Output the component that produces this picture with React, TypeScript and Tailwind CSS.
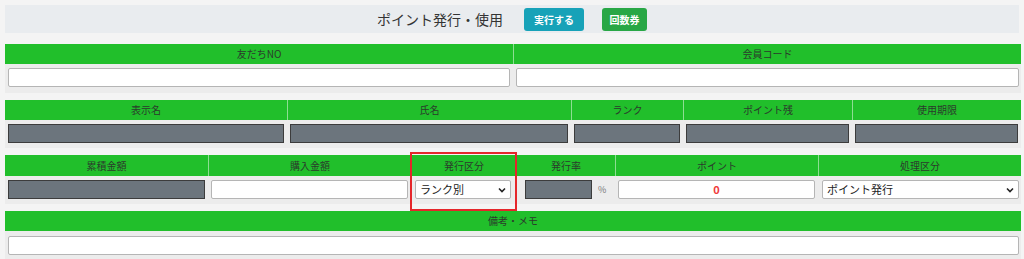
import React from "react";

const font = { fontFamily: '"Noto Sans CJK JP", "Noto Sans", sans-serif' };

function Head({ label, first }: { label: string; first?: boolean }) {
  return (
    <div
      className={`flex items-center justify-center text-[10px] text-[#2b3a2b] leading-none ${
        first ? "" : "border-l border-[#8ede93]"
      }`}
    >
      {label}
    </div>
  );
}

function WhiteInput({ children, center }: { children?: React.ReactNode; center?: boolean }) {
  return (
    <div
      className={`h-[19px] w-full bg-white border border-[#b5b5b5] rounded-[2px] flex items-center ${
        center ? "justify-center" : ""
      }`}
    >
      {children}
    </div>
  );
}

function GrayInput() {
  return <div className="h-[19px] w-full bg-[#6c757d] border border-[#3c3c3c]" />;
}

function Select({ label }: { label: string }) {
  return (
    <div className="h-[19px] w-full bg-white border border-[#b5b5b5] rounded-[2px] flex items-center justify-between pl-[4px] pr-[4px]">
      <span className="text-[11px] text-[#222] leading-none">{label}</span>
      <svg width="8" height="6" viewBox="0 0 8 6">
        <path d="M1 1.5 L4 4.5 L7 1.5" fill="none" stroke="#222" strokeWidth="1.6" />
      </svg>
    </div>
  );
}

export default function App() {
  return (
    <div className="w-[1024px] h-[259px] overflow-hidden bg-[#f4f4f4] pt-[5px]" style={font}>
      {/* title bar */}
      <div className="mx-[5px] h-[28px] bg-[#e9ecef] flex items-center justify-center">
        <span className="text-[14px] text-[#333] leading-none">ポイント発行・使用</span>
        <div className="ml-[21px] w-[60px] h-[23px] rounded-[3px] bg-[#17a2b8] text-white text-[10px] font-bold flex items-center justify-center">
          実行する
        </div>
        <div className="ml-[18px] w-[45px] h-[23px] rounded-[3px] bg-[#28a745] text-white text-[10px] font-bold flex items-center justify-center">
          回数券
        </div>
      </div>

      {/* table 1 */}
      <div className="mt-[11px] ml-[5px] w-[1016px]">
        <div className="grid grid-cols-[508px_508px] h-[20px] bg-[#21bf2b]">
          <Head label="友だちNO" first />
          <Head label="会員コード" />
        </div>
        <div className="grid grid-cols-[508px_508px] h-[29px] bg-[#ececec]">
          <div className="pl-[3px] pr-[3px] pt-[4px]">
            <WhiteInput />
          </div>
          <div className="pl-[3px] pr-[2px] pt-[4px]">
            <WhiteInput />
          </div>
        </div>
      </div>

      {/* table 2 */}
      <div className="mt-[7px] ml-[5px] w-[1016px]">
        <div className="grid grid-cols-[282px_284px_112px_169px_169px] h-[20px] bg-[#21bf2b]">
          <Head label="表示名" first />
          <Head label="氏名" />
          <Head label="ランク" />
          <Head label="ポイント残" />
          <Head label="使用期限" />
        </div>
        <div className="grid grid-cols-[282px_284px_112px_169px_169px] h-[28px] bg-[#ececec]">
          {[0, 1, 2, 3, 4].map((i) => (
            <div key={i} className="pl-[3px] pr-[3px] pt-[4px]">
              <GrayInput />
            </div>
          ))}
        </div>
      </div>

      {/* table 3 */}
      <div className="mt-[7px] ml-[5px] w-[1016px]">
        <div className="grid grid-cols-[203px_203px_105px_99px_203px_203px] h-[21px] bg-[#21bf2b]">
          <Head label="累積金額" first />
          <Head label="購入金額" />
          <Head label="発行区分" />
          <Head label="発行率" />
          <Head label="ポイント" />
          <Head label="処理区分" />
        </div>
        <div className="grid grid-cols-[203px_203px_105px_99px_203px_203px] h-[28px] bg-[#ececec]">
          <div className="pl-[3px] pr-[3px] pt-[4px]">
            <GrayInput />
          </div>
          <div className="pl-[3px] pr-[3px] pt-[4px]">
            <WhiteInput />
          </div>
          <div className="pl-[4px] pr-[5px] pt-[4px] relative">
            <div className="absolute left-[-1px] right-[-1px] top-[-24px] bottom-[-7px] border-2 border-[#e5262b] pointer-events-none" />
            <Select label="ランク別" />
          </div>
          <div className="pl-[9px] pt-[4px] flex items-start">
            <div className="w-[67px] h-[19px] bg-[#6c757d] border border-[#3c3c3c]" />
            <span className="ml-[6px] mt-[5px] text-[9px] text-[#777] leading-none">%</span>
          </div>
          <div className="pl-[3px] pr-[3px] pt-[4px]">
            <WhiteInput center>
              <span className="text-[11px] font-bold text-[#f03a3a] leading-none">0</span>
            </WhiteInput>
          </div>
          <div className="pl-[4px] pr-[2px] pt-[4px]">
            <Select label="ポイント発行" />
          </div>
        </div>
      </div>

      {/* table 4 */}
      <div className="mt-[7px] ml-[5px] w-[1016px]">
        <div className="grid grid-cols-[1016px] h-[20px] bg-[#21bf2b]">
          <Head label="備考・メモ" first />
        </div>
        <div className="h-[28px] bg-[#ececec] pl-[3px] pr-[2px] pt-[5px]">
          <WhiteInput />
        </div>
      </div>
    </div>
  );
}
